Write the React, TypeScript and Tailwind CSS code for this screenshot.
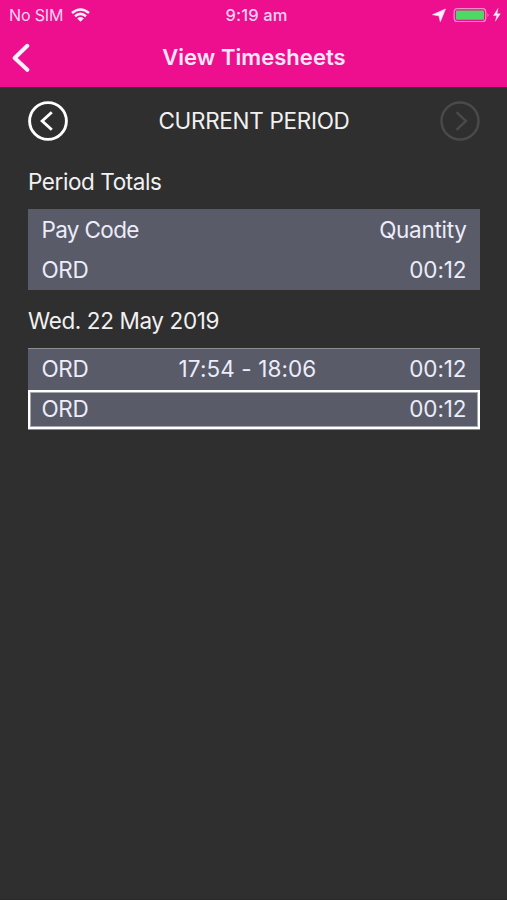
function StatusBar() {
  return (
    <div className="grid h-[29px] grid-cols-3 items-center pl-[9px] pr-[6px] text-[16px] leading-[20px] text-[#ffd3f3]">
      <div className="flex items-center gap-[8px]">
        <span className="whitespace-nowrap tracking-[-0.15px]">No SIM</span>
        <svg className="h-[14px] w-[19px]" viewBox="0 0 19 14" fill="none" stroke="#fff0fb" strokeWidth="2.5">
          <path d="M1 5Q9.500-2 18 5" />
          <path d="M4 8.200Q9.500 3.500 15 8.200" />
          <path d="M9.500 13.700L6.200 10.400Q9.500 7.800 12.800 10.400Z" fill="#fff0fb" stroke="none" />
        </svg>
      </div>
      <span className="whitespace-nowrap pl-[3px] text-center text-[16.5px] font-medium tracking-[0.15px]">9:19 am</span>
      <div className="flex items-center justify-end">
        <svg className="h-[14px] w-[69px]" viewBox="-1 0 69 14" fill="none">
          <path d="M12.500 1L-.5 6.700L5.900 7.800L7.300 13.700Z" fill="#fff0fb" stroke="#fff0fb" strokeWidth=".6" strokeLinejoin="round" />
          <rect x="21.200" y="0.700" width="31.500" height="12.900" rx="3" stroke="#f58acb" strokeWidth="1.300" />
          <rect x="23" y="2.500" width="28" height="9.300" rx="1" fill="#4cd964" />
          <path d="M54.500 5Q56.500 7 54.500 9Z" fill="#f58acb" />
          <path d="M65 .5L60.500 7.600H63.800L62.400 13.200L67.300 5.800H64Z" fill="#fff0fb" stroke="#fff0fb" strokeWidth=".4" />
        </svg>
      </div>
    </div>
  );
}

function Header() {
  return (
    <header className="h-[87px] bg-[#ed0f8d]">
      <StatusBar />
      <div className="grid h-[57px] grid-cols-[100px_1fr_100px] items-center">
        <svg className="ml-[12px] h-[30px] w-[18px]" viewBox="0 0 18 30" fill="none" stroke="#fff2fc" strokeWidth="4" strokeLinecap="round" strokeLinejoin="round">
          <path d="M15.300 2.800L2.700 15L15.300 26.800" />
        </svg>
        <h1 className="whitespace-nowrap pb-[1px] pl-[1px] text-center text-[22px] font-semibold leading-[30px] tracking-[0.05px] text-[#ffe6f8]">View Timesheets</h1>
      </div>
    </header>
  );
}

function PeriodNav() {
  return (
    <div className="flex h-[68px] items-center justify-between">
      <svg className="h-[40px] w-[40px]" viewBox="0 0 40 40" fill="none" stroke="#ffffff" strokeWidth="2.900">
        <circle cx="20" cy="20" r="18.400" />
        <path d="M23.800 11.200L14.200 20L23.800 28.800" />
      </svg>
      <span className="text-[22.5px] leading-[30px] tracking-[-0.3px]">CURRENT PERIOD</span>
      <svg className="h-[40px] w-[40px]" viewBox="0 0 40 40" fill="none" stroke="#4a4a4a" strokeWidth="2.400">
        <circle cx="20" cy="20" r="18.500" />
        <path d="M16.500 11.200L26 20L16.500 28.800" />
      </svg>
    </div>
  );
}

export default function App() {
  return (
    <main className="h-[900px] w-[507px] overflow-hidden bg-[#2f2f2f] font-['Inter','Liberation_Sans',sans-serif] text-[22.5px] leading-[30px] text-[#f1f1f1]">
      <Header />
      <section className="h-[813px] border-b border-[#292929] pl-[28px] pr-[27px]">
        <PeriodNav />
        <h2 className="flex h-[54px] items-center tracking-[-0.42px]">Period Totals</h2>
        <div className="h-[81px] bg-[#595b69] pl-[13.5px] pr-[13.5px] text-[#ececfa]">
          <div className="flex h-[41px] items-center justify-between">
            <span className="tracking-[-0.65px]">Pay Code</span>
            <span className="tracking-[-0.3px]">Quantity</span>
          </div>
          <div className="flex h-[40px] items-center justify-between">
            <span className="tracking-[-0.4px]">ORD</span>
            <span className="tracking-[-0.1px]">00:12</span>
          </div>
        </div>
        <h2 className="flex h-[58px] items-center pt-[4px] tracking-[-0.38px]">Wed. 22 May 2019</h2>
        <div className="bg-[#595b69] text-[#ececfa]">
          <div className="grid h-[42px] grid-cols-[120px_1fr_120px] items-center border-t border-[#8c8c94] pl-[13.5px] pr-[13.5px] pb-px">
            <span className="tracking-[-0.4px]">ORD</span>
            <span className="whitespace-nowrap pr-[13px] text-center tracking-[0.1px]">17:54 - 18:06</span>
            <span className="text-right tracking-[-0.1px]">00:12</span>
          </div>
          <div className="flex h-[39px] items-center justify-between border-2 border-white px-[11.5px] pb-[2px] shadow-[inset_0_0_0_1px_#a6a7b0,0_1px_0_0_#8a8a8a]">
            <span className="tracking-[-0.4px]">ORD</span>
            <span className="tracking-[-0.1px]">00:12</span>
          </div>
        </div>
      </section>
    </main>
  );
}
